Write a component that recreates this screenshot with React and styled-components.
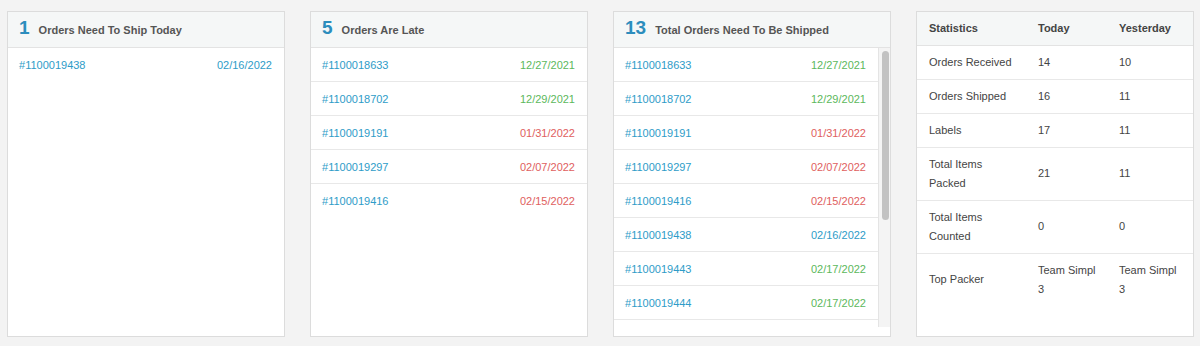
import React from "react";
import styled, { createGlobalStyle } from "styled-components";

const GlobalStyle = createGlobalStyle`
  body {
    margin: 0;
    background: #f3f3f3;
    font-family: "Liberation Sans", Arial, sans-serif;
  }
`;

const shipToday = [{ id: "1100019438", date: "02/16/2022", tone: "blue" }];

const late = [
  { id: "1100018633", date: "12/27/2021", tone: "green" },
  { id: "1100018702", date: "12/29/2021", tone: "green" },
  { id: "1100019191", date: "01/31/2022", tone: "red" },
  { id: "1100019297", date: "02/07/2022", tone: "red" },
  { id: "1100019416", date: "02/15/2022", tone: "red" },
];

// only the rows that fit in the scroll window are shown
const toShip = [
  ...late,
  { id: "1100019438", date: "02/16/2022", tone: "blue" },
  { id: "1100019443", date: "02/17/2022", tone: "green" },
  { id: "1100019444", date: "02/17/2022", tone: "green" },
];

const stats = [
  ["Orders Received", "14", "10"],
  ["Orders Shipped", "16", "11"],
  ["Labels", "17", "11"],
  ["Total Items Packed", "21", "11"],
  ["Total Items Counted", "0", "0"],
  ["Top Packer", "Team Simpl 3", "Team Simpl 3"],
];

const toneColors = {
  green: "#5cb85c",
  red: "#e0605e",
  blue: "#2e9cc8",
};

function OrderRows({ orders }) {
  return orders.map((o, i) => (
    <Row key={o.id + i}>
      <OrderLink href="#">#{o.id}</OrderLink>
      <DateText $tone={o.tone}>{o.date}</DateText>
    </Row>
  ));
}

function OrderPanel({ count, title, children }) {
  return (
    <Panel>
      <PanelHeader>
        <Count>{count}</Count>
        <Title>{title}</Title>
      </PanelHeader>
      {children}
    </Panel>
  );
}

export default function App() {
  return (
    <>
      <GlobalStyle />
      <Dashboard>
        <OrderPanel count={1} title="Orders Need To Ship Today">
          <List>
            <OrderRows orders={shipToday} />
          </List>
        </OrderPanel>
        <OrderPanel count={5} title="Orders Are Late">
          <List>
            <OrderRows orders={late} />
          </List>
        </OrderPanel>
        <OrderPanel count={13} title="Total Orders Need To Be Shipped">
          <ScrollArea>
            <List $scroll>
              <OrderRows orders={toShip} />
            </List>
            <ScrollTrack>
              <Thumb />
            </ScrollTrack>
          </ScrollArea>
        </OrderPanel>
        <Panel>
          <StatsTable>
            <colgroup>
              <col style={{ width: 109 }} />
              <col style={{ width: 81 }} />
              <col />
            </colgroup>
            <thead>
              <tr>
                <th>Statistics</th>
                <th>Today</th>
                <th>Yesterday</th>
              </tr>
            </thead>
            <tbody>
              {stats.map((s) => (
                <tr key={s[0]}>
                  <td>{s[0]}</td>
                  <td>{s[1]}</td>
                  <td>{s[2]}</td>
                </tr>
              ))}
            </tbody>
          </StatsTable>
        </Panel>
      </Dashboard>
    </>
  );
}

const Dashboard = styled.div`
  display: grid;
  grid-template-columns: repeat(4, 278px);
  column-gap: 25px;
  padding: 11px 6px 9px 7px;
`;

const Panel = styled.div`
  box-sizing: border-box;
  height: 326px;
  background: #ffffff;
  border: 1px solid #dcdcdc;
  display: flex;
  flex-direction: column;
  overflow: hidden;
`;

const PanelHeader = styled.div`
  display: flex;
  align-items: baseline;
  flex-shrink: 0;
  height: 36px;
  box-sizing: border-box;
  padding: 5px 12px 0 11px;
  background: #f5f7f7;
  border-bottom: 1px solid #e3e3e3;
`;

const Count = styled.span`
  font-size: 19px;
  font-weight: bold;
  color: #2c8dbd;
  margin-right: 9px;
`;

const Title = styled.span`
  font-size: 11px;
  font-weight: bold;
  color: #555555;
`;

const ScrollArea = styled.div`
  display: flex;
  height: 279px;
  flex-shrink: 0;
`;

const List = styled.div`
  flex: 1;
  overflow: hidden;

  & > div:last-child {
    border-bottom: ${(p) => (p.$scroll ? "1px solid #e8e8e8" : "none")};
  }
`;

const ScrollTrack = styled.div`
  width: 12px;
  box-sizing: border-box;
  padding: 3px 3px 0 3px;
  background: #f4f4f4;
  border-left: 1px solid #e4e4e4;
`;

const Thumb = styled.div`
  width: 7px;
  height: 169px;
  border-radius: 4px;
  background: #c2c2c2;
`;

const Row = styled.div`
  display: flex;
  justify-content: space-between;
  align-items: center;
  height: 34px;
  box-sizing: border-box;
  padding: 0 12px 0 11px;
  border-bottom: 1px solid #e8e8e8;
  font-size: 11px;
`;

const OrderLink = styled.a`
  color: #2e9cc8;
  text-decoration: none;
`;

const DateText = styled.span`
  color: ${(p) => toneColors[p.$tone]};
`;

const StatsTable = styled.table`
  width: 100%;
  table-layout: fixed;
  border-collapse: collapse;
  font-size: 11px;
  color: #444444;

  th {
    text-align: left;
    font-weight: bold;
    background: #f5f7f7;
    height: 33px;
    box-sizing: border-box;
    padding: 0 8px 1px 12px;
    border-bottom: 1px solid #e3e3e3;
    color: #444444;
  }

  td {
    padding: 7px 8px 7px 12px;
    line-height: 19px;
    vertical-align: middle;
    border-bottom: 1px solid #e8e8e8;
  }

  tbody tr:last-child td {
    border-bottom: none;
  }
`;
